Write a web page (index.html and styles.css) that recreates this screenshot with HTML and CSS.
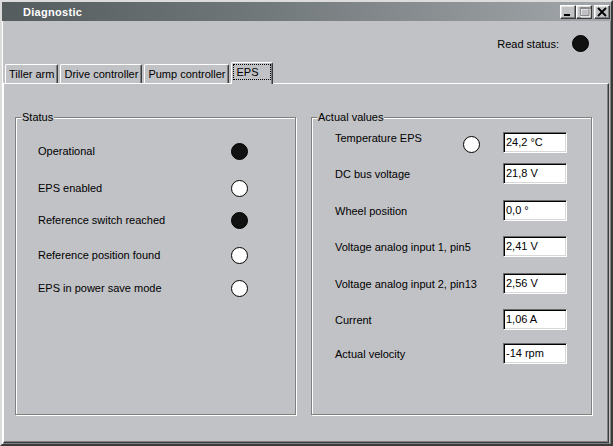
FILE: index.html
```html
<!DOCTYPE html>
<html>
<head>
<meta charset="utf-8">
<title>Diagnostic</title>
<link rel="stylesheet" href="styles.css">
</head>
<body>
<div class="window">
  <div class="titlebar">
    <span class="title">Diagnostic</span>
    <div class="tb-buttons">
      <div class="tb-btn">
        <svg width="14" height="12" viewBox="0 0 14 12"><rect x="3" y="8" width="6" height="2" fill="#000"/></svg>
      </div>
      <div class="tb-btn">
        <svg width="14" height="12" viewBox="0 0 14 12">
          <path d="M4 3h9v8h-9z" fill="none" stroke="#fff" stroke-width="1"/>
          <path d="M3.5 1.5h8.5v8h-8.5z" fill="none" stroke="#8a8a8a" stroke-width="1"/>
          <rect x="3" y="1" width="9.5" height="2" fill="#8a8a8a"/>
        </svg>
      </div>
      <div class="tb-btn close">
        <svg width="14" height="12" viewBox="0 0 14 12">
          <path d="M3 2L11 10M11 2L3 10" stroke="#000" stroke-width="1.8" fill="none"/>
        </svg>
      </div>
    </div>
  </div>
  <div class="client">
    <div class="read-status">
      <span>Read status:</span>
      <span class="led on"></span>
    </div>
    <div class="tabs">
      <div class="tab">Tiller arm</div>
      <div class="tab">Drive controller</div>
      <div class="tab">Pump controller</div>
      <div class="tab selected"><span class="focus">EPS</span></div>
    </div>
    <div class="panel">
      <div class="group status">
        <span class="legend">Status</span>
        <div class="status-grid">
          <span class="s-label">Operational</span><span class="led on"></span>
          <span class="s-label">EPS enabled</span><span class="led"></span>
          <span class="s-label">Reference switch reached</span><span class="led on"></span>
          <span class="s-label">Reference position found</span><span class="led"></span>
          <span class="s-label">EPS in power save mode</span><span class="led"></span>
        </div>
      </div>
      <div class="group values">
        <span class="legend">Actual values</span>
        <div class="values-grid">
          <span class="v-label first">Temperature EPS</span><span class="led temp"></span><span class="field">24,2 °C</span>
          <span class="v-label">DC bus voltage</span><span></span><span class="field">21,8 V</span>
          <span class="v-label">Wheel position</span><span></span><span class="field">0,0 °</span>
          <span class="v-label">Voltage analog input 1, pin5</span><span></span><span class="field">2,41 V</span>
          <span class="v-label">Voltage analog input 2, pin13</span><span></span><span class="field">2,56 V</span>
          <span class="v-label">Current</span><span></span><span class="field">1,06 A</span>
          <span class="v-label">Actual velocity</span><span></span><span class="field">-14 rpm</span>
        </div>
      </div>
    </div>
  </div>
</div>
</body>
</html>
```

FILE: styles.css
```css
* { box-sizing: border-box; }

html, body {
  margin: 0;
  padding: 0;
  background: #c1c2c6;
}

body {
  width: 613px;
  height: 446px;
  overflow: hidden;
  font-family: "Liberation Sans", Arial, sans-serif;
  font-size: 11px;
  color: #000;
}

.window {
  width: 613px;
  height: 446px;
  background: #c1c2c6;
  border: 2px solid;
  border-color: #dcdcdc #3a3a3a #3a3a3a #dcdcdc;
  box-shadow: inset 1px 1px 0 #ffffff, inset -1px -1px 0 #808080;
  display: flex;
  flex-direction: column;
}

.titlebar {
  height: 19px;
  flex: none;
  display: flex;
  justify-content: space-between;
  align-items: flex-start;
  background: linear-gradient(to right, #545c5d 0%, #6f7678 40%, #a3a7ab 100%);
  padding: 3px 1px 0 21px;
}

.title {
  color: #fff;
  font-weight: bold;
  font-size: 11px;
  letter-spacing: 0.3px;
  line-height: 16px;
  margin-top: -1px;
}

.tb-buttons {
  display: flex;
}

.tb-btn {
  width: 16px;
  height: 14px;
  background: #c1c2c6;
  border: 1px solid;
  border-color: #ffffff #3a3a3a #3a3a3a #ffffff;
  box-shadow: inset -1px -1px 0 #808080, inset 1px 1px 0 #e2e2e2;
  display: flex;
}

.tb-btn svg { display: block; }

.tb-btn.close { margin-left: 2px; }

.client {
  flex: 1;
  display: flex;
  flex-direction: column;
}

.read-status {
  height: 17px;
  margin-top: 14px;
  display: flex;
  justify-content: flex-end;
  align-items: center;
  gap: 13px;
  padding-right: 22px;
  font-size: 11px;
}

.led {
  width: 17px;
  height: 17px;
  border-radius: 50%;
  border: 1px solid #000;
  background: #fff;
  display: block;
}

.led.on { background: #111; }

.tabs {
  margin-top: 10px;
  height: 21px;
  display: flex;
  align-items: flex-end;
  gap: 2px;
  padding-left: 3px;
}

.tab {
  height: 19px;
  line-height: 18px;
  padding: 0 3px 0 3px;
  border-top: 1px solid #fff;
  border-left: 1px solid #fff;
  border-right: 1px solid #3a3a3a;
  border-radius: 2px 2px 0 0;
  box-shadow: inset -1px 0 0 #808080;
  white-space: nowrap;
}

.tab.selected {
  height: 22px;
  margin-bottom: -1px;
  padding: 1px 1px 0 1px;
  position: relative;
  z-index: 1;
  background: #c1c2c6;
  line-height: 14px;
}

.focus {
  display: block;
  border: 1px dotted #000;
  padding: 0 12px 0 2px;
  height: 16px;
}

.panel {
  flex: 1;
  margin: 0 2px 1px 1px;
  border-top: 1px solid #fff;
  border-left: 1px solid #fff;
  border-right: 1px solid #3a3a3a;
  border-bottom: 1px solid #3a3a3a;
  box-shadow: inset -1px -1px 0 #808080;
  display: grid;
  grid-template-columns: 281px 281px;
  column-gap: 15px;
  align-items: start;
  padding: 33px 0 0 11px;
}

.group {
  position: relative;
  height: 298px;
  border: 1px solid #808080;
  box-shadow: inset 1px 1px 0 #fff, 1px 1px 0 #fff;
}

.legend {
  position: absolute;
  top: -7px;
  left: 5px;
  padding: 0 1px;
  line-height: 13px;
  background: #c1c2c6;
}

.status { padding: 25px 0 0 22px; }

.status-grid {
  display: grid;
  grid-template-columns: 193px 17px;
  grid-template-rows: 37px 32px 35px 33px 17px;
  align-items: start;
}

.s-label { line-height: 17px; }

.values { padding: 14px 0 0 23px; }

.values-grid {
  display: grid;
  grid-template-columns: 128px 40px 64px;
  grid-template-rows: 31px 37px 36px 37px 36px 34px 21px;
  align-items: start;
}

.v-label {
  line-height: 22px;
  white-space: nowrap;
}

.v-label.first { line-height: 13px; }

.led.temp { margin-top: 4px; }

.field {
  width: 64px;
  height: 21px;
  background: #fff;
  border: 1px solid;
  border-color: #6a6a6a #ffffff #ffffff #6a6a6a;
  box-shadow: inset 1px 1px 0 #000, inset -1px -1px 0 #d8d8d8;
  padding-left: 2px;
  line-height: 19px;
  white-space: nowrap;
}
```
